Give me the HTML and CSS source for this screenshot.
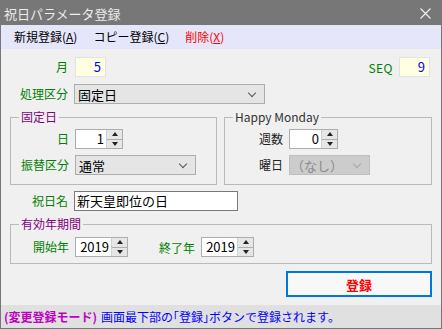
FILE: index.html
```html
<!DOCTYPE html>
<html lang="ja">
<head>
  <meta charset="UTF-8" />
  <title>祝日パラメータ登録</title>
  <link rel="stylesheet" href="styles.css">
</head>
<body>

<div class="window">
  <div class="titlebar">
    <span class="title">祝日パラメータ登録</span>
    <svg class="close" width="11" height="11" viewBox="0 0 11 11">
      <path d="M0.5 0.5 L10.5 10.5 M10.5 0.5 L0.5 10.5" stroke="#f2f2f2" stroke-width="1.1" fill="none"/>
    </svg>
  </div>

  <div class="menubar">
    <span class="menu-item">新規登録(<u>A</u>)</span>
    <span class="menu-item">コピー登録(<u>C</u>)</span>
    <span class="menu-item danger">削除(<u>X</u>)</span>
  </div>

  <div class="content">
    <div class="row">
      <label class="lbl">月</label>
      <div class="numbox month">5</div>
      <label class="lbl-seq">SEQ</label>
      <div class="numbox seq">9</div>
    </div>

    <div class="row row-kind">
      <label class="lbl">処理区分</label>
      <div class="select kind"><span>固定日</span><i class="chev"></i></div>
    </div>

    <div class="groups">
      <fieldset class="group fixed">
        <legend class="legend-purple">固定日</legend>
        <div class="row">
          <label class="lbl">日</label>
          <div class="spin day">
            <span class="spin-val">1</span>
            <span class="spin-btns"><span class="up"></span><span class="dn"></span></span>
          </div>
        </div>
        <div class="row row-gap">
          <label class="lbl">振替区分</label>
          <div class="select subst"><span>通常</span><i class="chev"></i></div>
        </div>
      </fieldset>

      <fieldset class="group happy">
        <legend class="legend-plain">Happy Monday</legend>
        <div class="row">
          <label class="lbl plain">週数</label>
          <div class="spin week">
            <span class="spin-val">0</span>
            <span class="spin-btns"><span class="up"></span><span class="dn"></span></span>
          </div>
        </div>
        <div class="row row-gap">
          <label class="lbl plain">曜日</label>
          <div class="select dow disabled"><span>（なし）</span><i class="chev"></i></div>
        </div>
      </fieldset>
    </div>

    <div class="row row-name">
      <label class="lbl">祝日名</label>
      <div class="textbox name">新天皇即位の日</div>
    </div>

    <fieldset class="group period">
      <legend class="legend-purple">有効年期間</legend>
      <div class="row">
        <label class="lbl">開始年</label>
        <div class="spin year">
          <span class="spin-val">2019</span>
          <span class="spin-btns"><span class="up"></span><span class="dn"></span></span>
        </div>
        <label class="lbl-end">終了年</label>
        <div class="spin year">
          <span class="spin-val">2019</span>
          <span class="spin-btns"><span class="up"></span><span class="dn"></span></span>
        </div>
      </div>
    </fieldset>

    <div class="actions">
      <button type="button" class="btn-save">登録</button>
    </div>
  </div>

  <div class="statusbar">
    <span class="mode">(変更登録モード)</span>
    <span class="hint">画面最下部の｢登録｣ボタンで登録されます。</span>
  </div>
</div>

</body>
</html>
```

FILE: styles.css
```css
body {
  margin: 0;
  font-family: "Noto Sans CJK JP", sans-serif;
  font-size: 12px;
  color: #000;
  background: #f0f0f0;
}
.window {
  width: 440px;
  height: 327px;
  border: 1px solid #777;
  display: flex;
  flex-direction: column;
  background: #f0f0f0;
}
.titlebar {
  height: 24px;
  background: #777;
  display: flex;
  align-items: center;
  justify-content: space-between;
  padding: 0 10px 0 3px;
}
.title {
  color: #ececec;
  font-size: 13px;
  line-height: 15px;
}
.menubar {
  height: 24px;
  background: #e6e6fa;
  display: flex;
  align-items: center;
  padding-left: 13px;
}
.menu-item {
  margin-right: 16px;
  line-height: 14px;
}
.menu-item.danger {
  color: #f00;
}
.content {
  flex: 1;
  padding: 8px 9px 0 9px;
}
.row {
  display: flex;
  align-items: center;
  height: 20px;
}
.row-kind {
  margin-top: 7px;
}
.row-gap {
  margin-top: 6px;
}
.row-name {
  margin-top: 6px;
}
.lbl {
  width: 58px;
  margin-right: 6px;
  text-align: right;
  color: #008000;
  line-height: 14px;
}
.lbl.plain {
  color: #222;
}
.lbl-seq {
  margin-left: auto;
  margin-right: 6px;
  color: #008000;
  letter-spacing: 0.5px;
}
.lbl-end {
  margin-left: 31px;
  margin-right: 6px;
  color: #008000;
}
.numbox {
  box-sizing: border-box;
  height: 20px;
  background: #ffffe1;
  border: 1px solid #e2e2e2;
  color: #0000ff;
  font-size: 13px;
  line-height: 18px;
  text-align: right;
  padding-right: 4px;
}
.numbox.month {
  width: 31px;
  margin-left: 1px;
}
.numbox.seq {
  width: 31px;
  margin-right: 2px;
}
.select {
  box-sizing: border-box;
  height: 20px;
  background: #e5e5e5;
  border: 1px solid #adadad;
  display: flex;
  align-items: center;
  justify-content: space-between;
  padding: 0 9px 0 3px;
  font-size: 13px;
}
.select.kind {
  width: 191px;
}
.select.subst {
  width: 121px;
}
.select.dow {
  width: 81px;
  padding-left: 1px;
}
.select.disabled {
  background: #cccccc;
  border-color: #bfbfbf;
  color: #8a8a8a;
}
.chev {
  width: 5px;
  height: 5px;
  border-right: 1px solid #555;
  border-bottom: 1px solid #555;
  transform: rotate(45deg);
  margin-top: -3px;
}
.select.disabled .chev {
  border-color: #a8a8a8;
}
.groups {
  display: flex;
  gap: 7px;
  margin-top: 6px;
}
fieldset.group {
  margin: 0;
  min-width: 0;
  border: 1px solid #b9b9b9;
  padding: 5px 0 9px 0;
}
.group legend {
  margin-left: 8px;
  padding: 0 2px;
  line-height: 14px;
  font-size: 12px;
}
.legend-purple {
  color: #800080;
}
.legend-plain {
  color: #333;
}
.group.fixed {
  width: 205px;
}
.group.happy {
  flex: 1;
}
.group.period {
  margin-top: 6px;
  padding: 6px 0 6px 0;
}
.spin {
  box-sizing: border-box;
  height: 20px;
  display: flex;
  background: #fff;
  border: 1px solid #adadad;
}
.spin.day {
  width: 48px;
}
.spin.week {
  width: 49px;
}
.spin.year {
  width: 53px;
}
.spin-val {
  flex: 1;
  text-align: right;
  padding-right: 2px;
  font-size: 13px;
  line-height: 18px;
}
.spin-btns {
  width: 15px;
  display: flex;
  flex-direction: column;
  background: #e6e6e6;
  border-left: 1px solid #d0d0d0;
}
.spin-btns span {
  flex: 1;
  display: flex;
  align-items: center;
  justify-content: center;
}
.spin-btns .up {
  border-bottom: 1px solid #adadad;
}
.spin-btns .up::before {
  content: "";
  border-left: 3px solid transparent;
  border-right: 3px solid transparent;
  border-bottom: 4px solid #222;
}
.spin-btns .dn::before {
  content: "";
  border-left: 3px solid transparent;
  border-right: 3px solid transparent;
  border-top: 4px solid #222;
}
.textbox {
  box-sizing: border-box;
  height: 20px;
  background: #fff;
  border: 1px solid #7a7a7a;
  font-size: 13px;
  line-height: 18px;
  padding-left: 2px;
}
.textbox.name {
  width: 164px;
}
.actions {
  display: flex;
  justify-content: flex-end;
  margin-top: 7px;
}
.btn-save {
  box-sizing: border-box;
  width: 146px;
  height: 26px;
  background: #f8f8f8;
  border: 2px solid #0078d7;
  color: #f00;
  font-family: inherit;
  font-size: 13px;
  font-weight: bold;
  padding: 0;
}
.statusbar {
  height: 23px;
  background: #e0e0e0;
  display: flex;
  align-items: center;
  padding-left: 3px;
  line-height: 14px;
}
.mode {
  color: #c000c0;
  font-weight: bold;
  margin-right: 4px;
}
.hint {
  color: #0000ff;
}
```
